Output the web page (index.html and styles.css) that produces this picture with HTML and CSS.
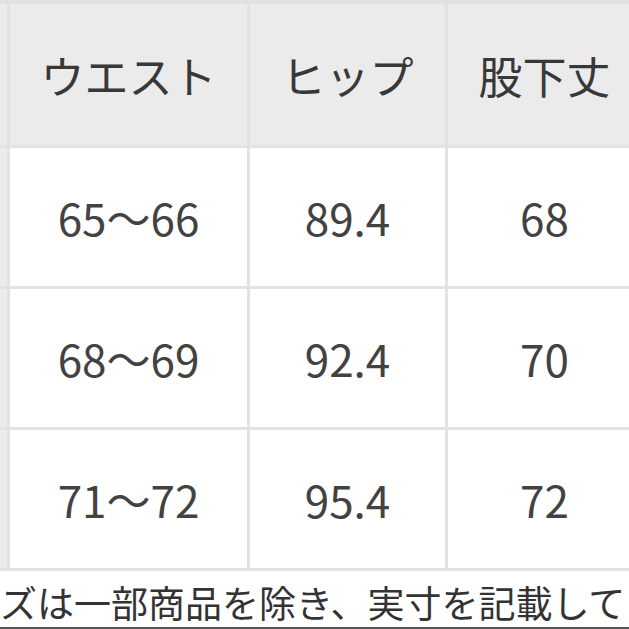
FILE: index.html
```html
<!DOCTYPE html>
<html lang="ja">
<head>
<meta charset="utf-8">
<link rel="stylesheet" href="styles.css">
</head>
<body>
<div class="page">
  <div class="table">
    <div class="cell edge head"></div>
    <div class="cell head">ウエスト</div>
    <div class="cell head">ヒップ</div>
    <div class="cell head">股下丈</div>

    <div class="cell edge"></div>
    <div class="cell">65〜66</div>
    <div class="cell">89.4</div>
    <div class="cell">68</div>

    <div class="cell edge"></div>
    <div class="cell">68〜69</div>
    <div class="cell">92.4</div>
    <div class="cell">70</div>

    <div class="cell edge"></div>
    <div class="cell">71〜72</div>
    <div class="cell">95.4</div>
    <div class="cell">72</div>
  </div>
  <div class="note">ズは一部商品を除き、実寸を記載して</div>
</div>
</body>
</html>
```
FILE: styles.css
```css
html, body {
  margin: 0;
  padding: 0;
  background: #ffffff;
}
body {
  width: 629px;
  height: 629px;
  overflow: hidden;
  font-family: "Noto Sans CJK JP", "Noto Sans", sans-serif;
}
.page {
  width: 629px;
  height: 629px;
  display: flex;
  flex-direction: column;
  overflow: hidden;
}
.table {
  display: grid;
  grid-template-columns: 7px 237px 195px 193px;
  grid-template-rows: 141px 138px 138px 138px;
  gap: 3px;
  padding: 4px 0 3px 0;
  background: #e2e2e2;
  width: 641px;
  flex: none;
}
.cell {
  background: #ffffff;
  display: flex;
  align-items: center;
  justify-content: center;
  font-size: 44px;
  color: #424242;
  white-space: nowrap;
}
.cell.head {
  background: #ebebeb;
  color: #383838;
}
.cell.edge {
  background: #ececec;
}
.note {
  flex: none;
  height: 53px;
  padding-top: 3px;
  font-size: 37px;
  line-height: 56px;
  color: #333333;
  white-space: nowrap;
  border-bottom: 2px solid #555555;
  overflow: hidden;
}
```
